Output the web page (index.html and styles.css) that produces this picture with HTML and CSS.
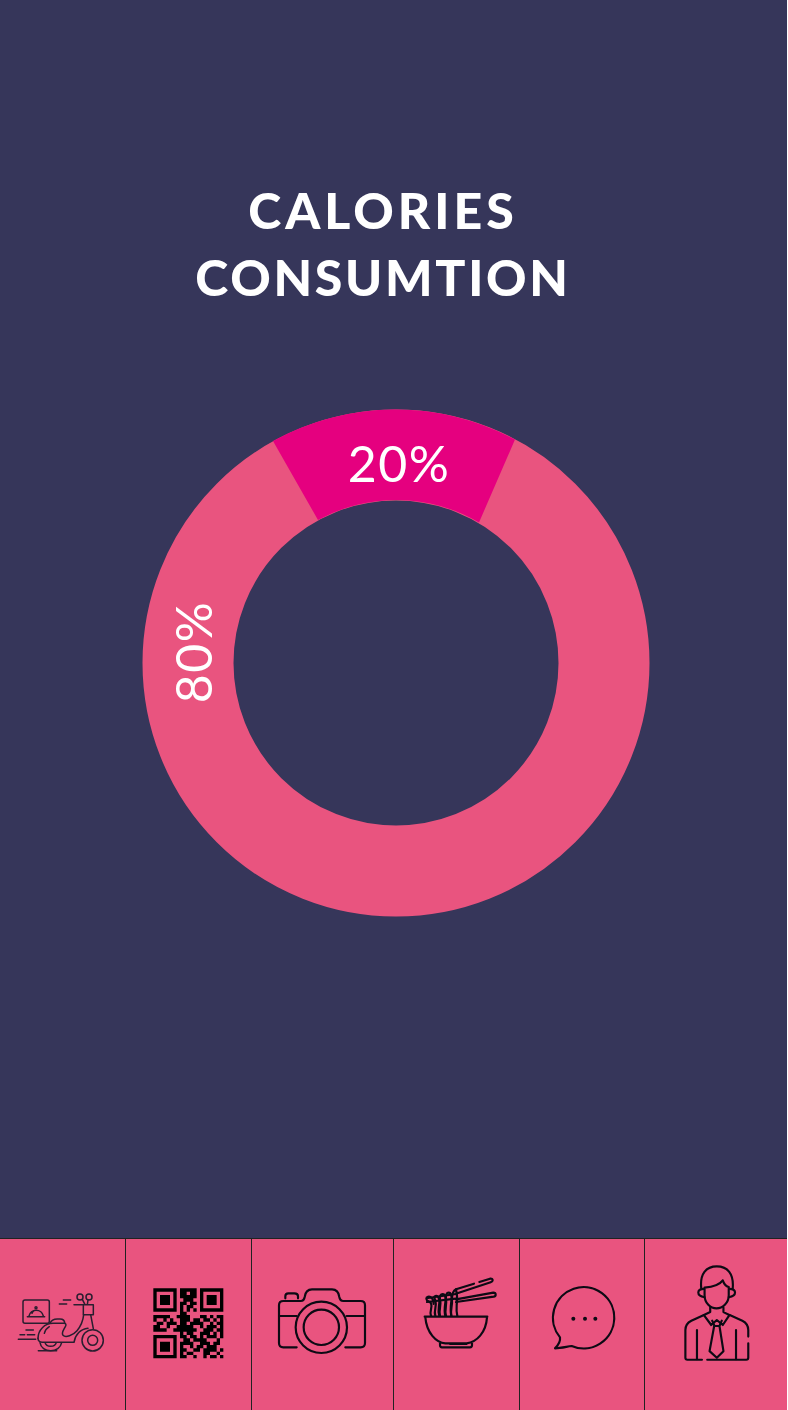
FILE: index.html
```html
<!DOCTYPE html>
<html lang="en">
<head>
  <meta charset="UTF-8">
  <title>Calories Consumtion</title>
  <link rel="stylesheet" href="styles.css">
</head>
<body>
  <div class="app">
    <main class="content">
      <h1 class="title"><span class="line-one">CALORIES</span><br><span class="line-two">CONSUMTION</span></h1>
      <svg class="chart" viewBox="0 0 508 508">
        <circle class="ring" cx="254" cy="254" r="208"/>
        <path class="slice" transform="translate(254 254)" d="M-123 -222A253.5 253.5 0 0 1 119 -223.500L83 -140.500A162.500 162.500 0 0 0 -78 -143z"/>
        <text class="pct" x="257" y="73">20%</text>
        <text class="pct" transform="translate(70 243) rotate(-90)">80%</text>
      </svg>
    </main>
    <nav class="tabs">
      <div class="tab">
        <svg class="icon thin" viewBox="0 27 375 513">
          <rect x="69" y="210" width="79" height="70" rx="6"/>
          <path d="M82 260h52M87 258a22 22 0 0 1 43 0M96 250a14 14 0 0 1 8-9"/>
          <circle cx="108" cy="233" r="3"/>
          <circle cx="240" cy="201" r="9"/>
          <circle cx="267" cy="201" r="9"/>
          <path d="M247 208l8 16M264 210l-2 14M222 224h28M250 224h30v30h-30zM178 222h22M190 210h22"/>
          <path d="M150 280q5-13 22-13h8q14 0 14 13"/>
          <path d="M114 325c0-25 20-45 45-45h34c4 0 6 4 4 8-6 12-14 20-8 28 8 8 30 0 42-14s18-28 20-48"/>
          <path d="M114 325q0 11 12 12h96c4-24 20-40 42-42M272 254l8 42M133 310q3-13 15-20"/>
          <path d="M120 338c2 15 16 24 32 24s30-9 33-24M135 338c2 7 9 11 17 11s15-4 17-11"/>
          <circle cx="278" cy="331" r="32"/>
          <circle cx="278" cy="331" r="15"/>
          <path d="M115 362h55M78 300h22M60 314h14M82 314h22M55 328h52"/>
        </svg>
      </div>
      <div class="tab">
        <svg class="icon" viewBox="378 27 375 513">
          <g transform="translate(460 175) scale(10)">
            <path class="finder" d="M0 0h7v7H0zM1 1v5h5V1zM2 2h3v3H2zM14 0h7v7h-7zM15 1v5h5V1zM16 2h3v3h-3zM0 14h7v7H0zM1 15v5h5v-5zM2 16h3v3H2z"/>
            <path class="modules" d="M8 .5h5M8 1.500h2M11 1.500h2M8 2.500h5M9 3.500h3M8 4.500h2M11 4.500h2M8 5.500h1M10 5.500h2M8 6.500h1M10 6.500h1M12 6.500h1M8 7.500h2
              M0 8.500h5M7 8.500h4M14 8.500h2M17 8.500h1M19 8.500h2
              M0 9.500h1M3 9.500h1M5 9.500h1M8 9.500h3M12 9.500h2M15 9.500h2M18 9.500h1M20 9.500h1
              M1 10.500h2M4 10.500h3M8 10.500h2M11 10.500h4M17 10.500h1M19 10.500h2
              M0 11.500h2M4 11.500h1M7 11.500h5M14 11.500h1M16 11.500h3M20 11.500h1
              M0 12.500h4M6 12.500h7M15 12.500h3M19 12.500h2
              M8 13.500h1M10 13.500h2M14 13.500h3M18 13.500h1M20 13.500h1
              M8 14.500h2M11 14.500h2M14 14.500h1M16 14.500h3M20 14.500h1
              M9 15.500h2M12 15.500h4M19 15.500h1
              M8 16.500h4M14 16.500h3M18 16.500h2
              M8 17.500h1M11 17.500h1M13 17.500h2M16 17.500h3
              M8 18.500h2M12 18.500h2M15 18.500h4M20 18.500h1
              M8 19.500h1M10 19.500h2M15 19.500h2M19 19.500h1
              M8 20.500h2M12 20.500h1M15 20.500h1M17 20.500h2M20 20.500h1"/>
          </g>
        </svg>
      </div>
      <div class="tab">
        <svg class="icon" viewBox="6 27 423 513">
          <path d="M140 352h-40q-13 0-13-13V226q0-13 13-13h52q10 0 12-12 3-23 22-23h60q19 0 22 23 2 12 12 12h52q13 0 13 13v113q0 13-13 13h-46"/>
          <path d="M87 258h53M290 258h52M106 205v-6q0-9 9-9h18q11 0 11 9v6"/>
          <circle cx="214" cy="292" r="77"/>
          <circle cx="214" cy="292" r="53"/>
        </svg>
      </div>
      <div class="tab">
        <svg class="icon" viewBox="432 27 375 513">
          <path d="M524 260h188M526 262c4 46 32 76 60 78h64c30-4 58-32 61-78M570 340v6q0 6 6 6h84q6 0 6-6v-6M600 342h50"/>
          <path d="M618 178l54-17M688 156l32-10q8-1 8 5 0 4-6 6l-100 33M618 208l112-20q7 0 7 6 0 5-6 6l-113 16"/>
          <path d="M543 258c-6-16 6-24 0-38-3-6-14-6-14-14 0-6 8-8 14-4s8 12 8 20"/>
          <path d="M556 258c-6-18 6-28 0-46-2-8-6-12 0-14 8-3 12 6 12 18 0 14-6 26 0 42"/>
          <path d="M570 258c-6-18 6-30 0-50-2-10 2-16 8-16 8 0 10 12 8 26-2 14-4 26 0 40"/>
          <path d="M588 258c-6-18 4-32 0-52-2-10 2-18 8-18 8 0 10 12 8 26-2 16-4 28 0 44"/>
          <path d="M604 258c-4-18 4-32 2-50 0-14 4-26 12-30 4 16 4 32 2 48-1 12 0 22 2 32"/>
          <path d="M531 216l86-10M534 204l84-12"/>
        </svg>
      </div>
      <div class="tab">
        <svg class="icon" viewBox="0 27 372 513">
          <path d="M120 322A92 92 0 1 1 155 348C140 350 122 355 105 355C115 345 122 335 120 322z"/>
          <circle class="dot" cx="160" cy="266" r="6"/>
          <circle class="dot" cx="195" cy="266" r="6"/>
          <circle class="dot" cx="226" cy="266" r="6"/>
        </svg>
      </div>
      <div class="tab">
        <svg class="icon" viewBox="375 27 429 513">
          <path d="M545 175c-5-45 15-67 47-67s52 22 48 67"/>
          <path d="M555 172v23c0 24 18 40 36 40s37-16 37-40v-25c-8-2-14-8-18-20-10 14-34 20-55 22z"/>
          <path d="M553 176q-17 0-17 11t19 14M630 176q17 0 17 11t-19 14"/>
          <path d="M572 232v14l-19 9 22 30 17-15 18 15 20-30-18-9v-14"/>
          <path d="M578 272l7 16h15l7-16M584 288l-14 76 22 20 20-20-12-76"/>
          <path d="M553 255l-38 17c-12 6-18 16-18 28v84q0 6 6 6h44M631 255l38 17c12 6 18 16 18 28v20M687 340v44q0 6-6 6H563"/>
          <path d="M532 300v88M650 300v88"/>
        </svg>
      </div>
    </nav>
  </div>
</body>
</html>
```

FILE: styles.css
```css
html, body {
  margin: 0;
  background-color: #fff;
}
.app {
  width: 787px;
  height: 1410px;
  display: flex;
  flex-direction: column;
  background-color: #36365a;
  font-family: 'Lato', sans-serif;
}
.content {
  flex: 1;
  display: flex;
  flex-direction: column;
  padding-top: 177px;
}
.title {
  margin: 0;
  padding-right: 21px;
  color: #fff;
  font-size: 50px;
  font-weight: 900;
  line-height: 67px;
  text-align: center;
}
.line-one {
  letter-spacing: 4px;
}
.line-two {
  letter-spacing: 2.700px;
}
.chart {
  display: block;
  width: 508px;
  height: 508px;
  margin: 98px 0 0 142px;
}
.ring {
  fill: none;
  stroke: #e9547f;
  stroke-width: 91;
}
.slice {
  fill: #e5007f;
}
.pct {
  fill: #fff;
  font-size: 50px;
  font-weight: 400;
  letter-spacing: 1.500px;
  text-anchor: middle;
}
.tabs {
  display: grid;
  grid-template-columns: 126px 126px 142px 126px 125px 142px;
  height: 171px;
  border-top: 1px solid #222;
  background-color: #e9547f;
}
.tab {
  border-right: 1px solid #222;
}
.tab:last-child {
  border-right: none;
}
.icon {
  display: block;
  width: 100%;
  height: 100%;
  fill: none;
  stroke: #0d0a14;
  stroke-width: 6.500;
  stroke-linecap: round;
  stroke-linejoin: round;
}
.thin {
  stroke: #2a1e30;
  stroke-width: 4.500;
}
.finder {
  fill: #000;
  fill-rule: evenodd;
  stroke: none;
}
.modules {
  stroke: #000;
  stroke-width: 1.020;
  stroke-linecap: butt;
}
.dot {
  fill: #0d0a14;
  stroke: none;
}
```
